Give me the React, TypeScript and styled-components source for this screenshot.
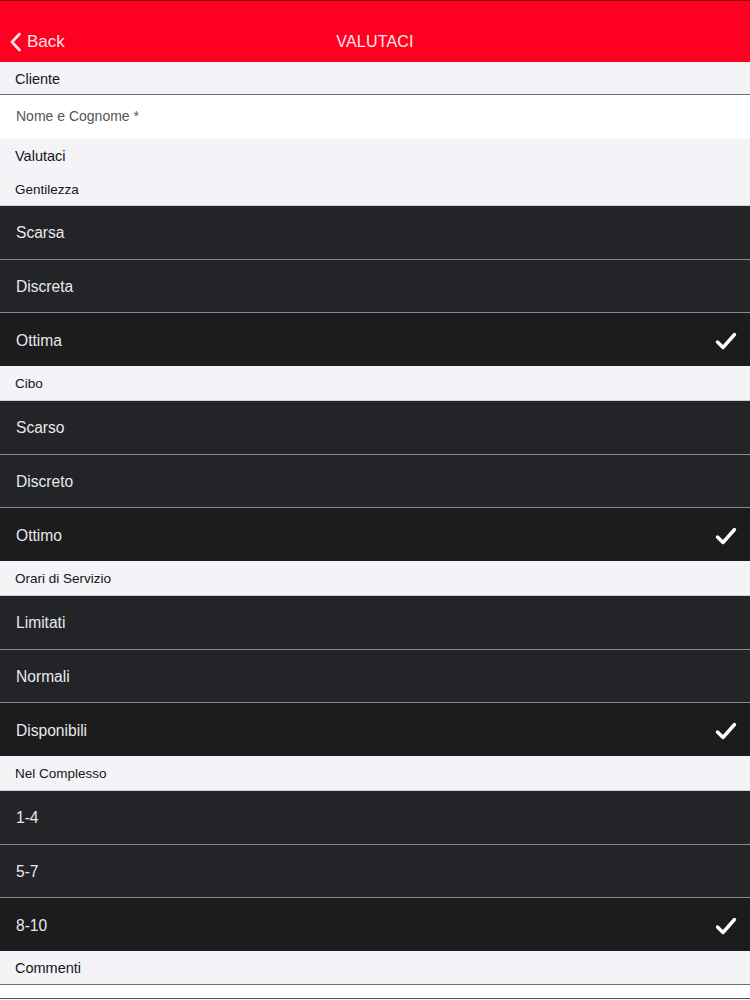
import React from "react";
import styled, { createGlobalStyle } from "styled-components";

const Global = createGlobalStyle`
  html, body { margin: 0; padding: 0; background: #f4f3f7; }
  body { font-family: "Liberation Sans", Arial, sans-serif; -webkit-font-smoothing: antialiased; }
  * { box-sizing: border-box; }
`;

const Page = styled.div`
  width: 750px;
  height: 1000px;
  overflow: hidden;
  display: flex;
  flex-direction: column;
  background: #f4f3f7;
`;

const NavBar = styled.header`
  height: 62px;
  flex: none;
  background: #ff0022;
  border-top: 1px solid #8a0012;
  padding-top: 21px;
  display: grid;
  grid-template-columns: 1fr auto 1fr;
  align-items: center;
`;

const BackButton = styled.div`
  display: flex;
  align-items: center;
  gap: 5px;
  padding-left: 9px;
  color: #fbe3e6;
  font-size: 17px;
`;

const Title = styled.div`
  color: #fde8ea;
  font-size: 16px;
  letter-spacing: 0.2px;
`;

const SectionHeader = styled.div<{ $h: number; $size: number; $border?: string }>`
  height: ${(p) => p.$h}px;
  flex: none;
  display: flex;
  align-items: center;
  padding: 1px 15px 0;
  font-size: ${(p) => p.$size}px;
  color: #151515;
  background: #f4f3f7;
  border-bottom: ${(p) => (p.$border ? `1px solid ${p.$border}` : "none")};
`;

const InputField = styled.div<{ $h: number }>`
  height: ${(p) => p.$h}px;
  flex: none;
  background: #ffffff;
  display: flex;
  align-items: center;
  padding: 0 16px 2px;
  font-size: 14px;
  color: #555558;
`;

const Group = styled.div`
  height: 160px;
  flex: none;
  display: flex;
  flex-direction: column;
`;

const OptionRow = styled.div<{ $selected?: boolean; $first?: boolean }>`
  flex: 1;
  display: flex;
  align-items: center;
  justify-content: space-between;
  padding: 2px 13px 0 16px;
  background: ${(p) => (p.$selected ? "#1c1b1e" : "#232427")};
  border-top: ${(p) => (p.$first ? "none" : "1px solid #8a8a8c")};
  color: #e9e9ea;
  font-size: 15.6px;
`;

const BottomField = styled.div`
  height: 15px;
  flex: none;
  background: #ffffff;
  border-top: 1px solid #6e6e70;
  border-bottom: 1px solid #555;
`;

const Chevron = () => (
  <svg width="13" height="20" viewBox="0 0 13 20">
    <path d="M10.5 2 L3 10 L10.5 18" fill="none" stroke="#fbe3e6" strokeWidth="2.8" strokeLinecap="round" strokeLinejoin="round" />
  </svg>
);

const Check = () => (
  <svg width="22" height="18" viewBox="0 0 22 18">
    <path d="M2.5 10 L8 15.5 L19.5 2.5" fill="none" stroke="#ffffff" strokeWidth="3.4" strokeLinecap="round" strokeLinejoin="round" />
  </svg>
);

const groups = [
  { title: "Gentilezza", options: ["Scarsa", "Discreta", "Ottima"] },
  { title: "Cibo", options: ["Scarso", "Discreto", "Ottimo"] },
  { title: "Orari di Servizio", options: ["Limitati", "Normali", "Disponibili"] },
  { title: "Nel Complesso", options: ["1-4", "5-7", "8-10"] },
];

export default function App() {
  return (
    <>
      <Global />
      <Page>
        <NavBar>
          <BackButton>
            <Chevron />
            <span>Back</span>
          </BackButton>
          <Title>VALUTACI</Title>
          <div />
        </NavBar>
        <SectionHeader $h={33} $size={14.5} $border="#6e6e70">Cliente</SectionHeader>
        <InputField $h={44}>Nome e Cognome *</InputField>
        <SectionHeader $h={33} $size={14.5}>Valutaci</SectionHeader>
        {groups.map((g, gi) => (
          <React.Fragment key={g.title}>
            <SectionHeader $h={gi === 0 ? 34 : 35} $size={13.5} $border="#d0d0d2">
              {g.title}
            </SectionHeader>
            <Group>
              {g.options.map((o, i) => (
                <OptionRow key={o} $first={i === 0} $selected={i === 2}>
                  <span>{o}</span>
                  {i === 2 && <Check />}
                </OptionRow>
              ))}
            </Group>
          </React.Fragment>
        ))}
        <SectionHeader $h={33} $size={14.5}>Commenti</SectionHeader>
        <BottomField />
      </Page>
    </>
  );
}
